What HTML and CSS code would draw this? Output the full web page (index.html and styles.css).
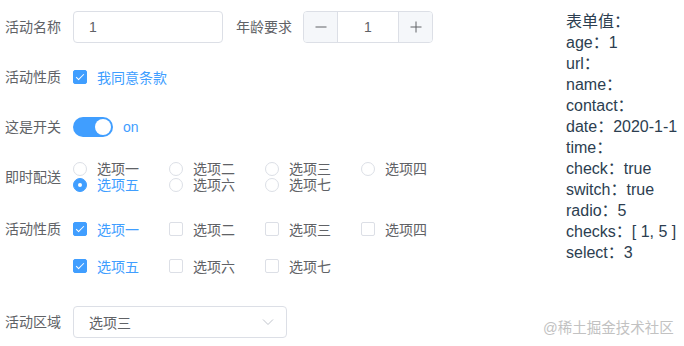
FILE: index.html
```html
<!DOCTYPE html>
<html lang="zh">
<head>
  <meta charset="utf-8">
  <title>表单</title>
  <link rel="stylesheet" href="styles.css">
</head>
<body>
  <div class="page">
    <form class="form">
      <div class="item">
        <label class="label">活动名称</label>
        <div class="input"><span>1</span></div>
        <label class="label inline">年龄要求</label>
        <div class="number">
          <span class="numBtn minus">
            <svg width="12" height="12" viewBox="0 0 12 12"><path d="M0.5 6 H11.5" stroke="#606266" stroke-width="1"/></svg>
          </span>
          <span class="numVal">1</span>
          <span class="numBtn plus">
            <svg width="12" height="12" viewBox="0 0 12 12"><path d="M0.5 6 H11.5 M6 0.5 V11.5" stroke="#606266" stroke-width="1"/></svg>
          </span>
        </div>
      </div>

      <div class="item">
        <label class="label">活动性质</label>
        <span class="check checked"></span>
        <span class="optText active">我同意条款</span>
      </div>

      <div class="item">
        <label class="label">这是开关</label>
        <span class="switch"><span class="knob"></span></span>
        <span class="switchText">on</span>
      </div>

      <div class="item">
        <label class="label">即时配送</label>
        <div class="radios">
          <span class="opt"><span class="radio"></span>选项一</span>
          <span class="opt"><span class="radio"></span>选项二</span>
          <span class="opt"><span class="radio"></span>选项三</span>
          <span class="opt"><span class="radio"></span>选项四</span>
          <span class="opt active"><span class="radio on"></span>选项五</span>
          <span class="opt"><span class="radio"></span>选项六</span>
          <span class="opt"><span class="radio"></span>选项七</span>
        </div>
      </div>

      <div class="item top">
        <label class="label">活动性质</label>
        <div class="checks">
          <span class="opt active"><span class="check checked"></span>选项一</span>
          <span class="opt"><span class="check"></span>选项二</span>
          <span class="opt"><span class="check"></span>选项三</span>
          <span class="opt"><span class="check"></span>选项四</span>
          <span class="opt active"><span class="check checked"></span>选项五</span>
          <span class="opt"><span class="check"></span>选项六</span>
          <span class="opt"><span class="check"></span>选项七</span>
        </div>
      </div>

      <div class="item last">
        <label class="label">活动区域</label>
        <div class="select">
          <span>选项三</span>
          <svg class="arrow" width="12" height="8" viewBox="0 0 12 8"><path d="M1 1.5 L6 6.5 L11 1.5" fill="none" stroke="#c0c4cc" stroke-width="1"/></svg>
        </div>
      </div>
    </form>

    <div class="values">
      <div>表单值：</div>
      <div>age：1</div>
      <div>url：</div>
      <div>name：</div>
      <div>contact：</div>
      <div>date：2020-1-1</div>
      <div>time：</div>
      <div>check：true</div>
      <div>switch：true</div>
      <div>radio：5</div>
      <div>checks：[ 1, 5 ]</div>
      <div>select：3</div>
    </div>
  </div>

  <div class="watermark">@稀土掘金技术社区</div>
</body>
</html>
```

FILE: styles.css
```css
body {
  margin: 0;
  background: #fff;
  font-family: "Liberation Sans", "Noto Sans CJK SC", sans-serif;
  font-size: 14px;
  color: #606266;
}

.page {
  display: flex;
  padding-top: 11px;
}

.form {
  flex: 0 0 566px;
}

.item {
  display: flex;
  align-items: center;
  height: 32px;
  margin-bottom: 18px;
}

.item.top {
  align-items: flex-start;
  height: auto;
  padding-top: 2px;
  margin-bottom: 24px;
}

.label {
  width: 56px;
  padding: 0 12px 0 5px;
  line-height: 32px;
  color: #606266;
  white-space: nowrap;
}

.label.inline {
  padding-left: 13px;
  padding-right: 11px;
}

.input {
  box-sizing: border-box;
  width: 150px;
  height: 32px;
  border: 1px solid #dcdfe6;
  border-radius: 4px;
  padding-left: 15px;
  line-height: 30px;
  color: #606266;
}

.number {
  display: flex;
  box-sizing: border-box;
  width: 130px;
  height: 32px;
  border: 1px solid #dcdfe6;
  border-radius: 4px;
  overflow: hidden;
}

.numBtn {
  display: flex;
  align-items: center;
  justify-content: center;
  width: 33px;
  background: #f5f7fa;
}

.minus {
  border-right: 1px solid #dcdfe6;
}

.plus {
  border-left: 1px solid #dcdfe6;
}

.numVal {
  flex-grow: 1;
  text-align: center;
  line-height: 30px;
}

.check {
  box-sizing: border-box;
  position: relative;
  display: inline-block;
  width: 14px;
  height: 14px;
  border: 1px solid #dcdfe6;
  border-radius: 2px;
  background: #fff;
  margin-right: 10px;
}

.check.checked {
  background: #409eff;
  border-color: #409eff;
}

.check.checked::after {
  content: "";
  position: absolute;
  left: 4px;
  top: 1px;
  width: 3px;
  height: 7px;
  border: 1px solid #fff;
  border-left: 0;
  border-top: 0;
  transform: rotate(45deg);
}

.optText {
  color: #606266;
}

.active,
.optText.active {
  color: #409eff;
}

.switch {
  position: relative;
  display: inline-block;
  width: 40px;
  height: 20px;
  border-radius: 10px;
  background: #409eff;
  margin-right: 10px;
}

.knob {
  position: absolute;
  top: 2px;
  right: 2px;
  width: 16px;
  height: 16px;
  border-radius: 50%;
  background: #fff;
}

.switchText {
  color: #409eff;
}

.radios,
.checks {
  display: grid;
  grid-template-columns: repeat(4, 96px);
}

.radios .opt {
  display: flex;
  align-items: center;
  height: 16px;
  line-height: 16px;
}

.checks {
  row-gap: 5px;
}

.checks .opt {
  display: flex;
  align-items: center;
  height: 32px;
}

.opt {
  white-space: nowrap;
}

.radio {
  box-sizing: border-box;
  display: inline-block;
  width: 14px;
  height: 14px;
  border: 1px solid #dcdfe6;
  border-radius: 50%;
  background: #fff;
  margin-right: 10px;
  position: relative;
}

.radio.on {
  background: #409eff;
  border-color: #409eff;
}

.radio.on::after {
  content: "";
  position: absolute;
  left: 4px;
  top: 4px;
  width: 4px;
  height: 4px;
  border-radius: 50%;
  background: #fff;
}

.select {
  box-sizing: border-box;
  display: flex;
  align-items: center;
  justify-content: space-between;
  width: 214px;
  height: 32px;
  border: 1px solid #dcdfe6;
  border-radius: 4px;
  padding: 0 12px 0 15px;
  color: #606266;
}

.values {
  font-size: 16px;
  line-height: 21px;
  color: #2c3e50;
  white-space: nowrap;
}

.watermark {
  position: absolute;
  left: 543px;
  top: 316px;
  font-size: 14.5px;
  color: #c2c2c2;
  white-space: nowrap;
}
```
